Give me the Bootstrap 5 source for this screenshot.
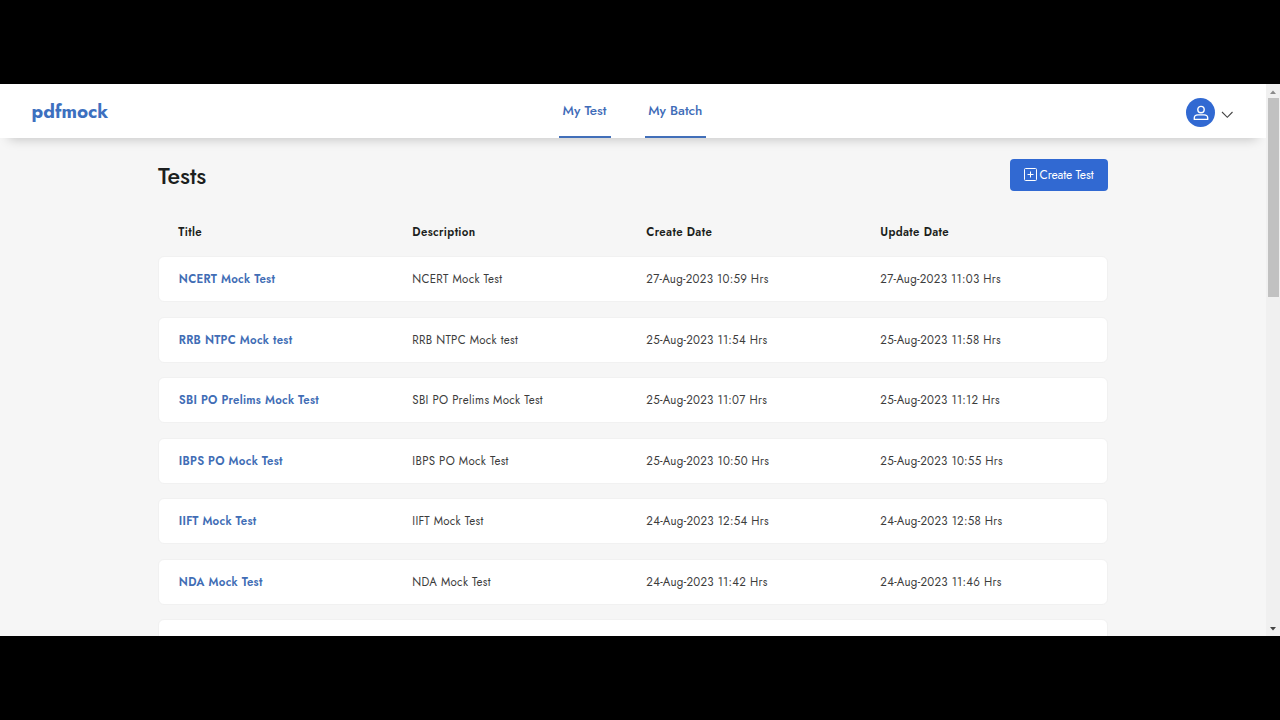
<!DOCTYPE html>
<html lang="en">
<head>
<meta charset="utf-8">
<meta name="viewport" content="width=device-width, initial-scale=1">
<title>pdfmock</title>
<link href="https://cdn.jsdelivr.net/npm/bootstrap@5.3.0/dist/css/bootstrap.min.css" rel="stylesheet">
<style>
  body { font-family: Jost, Lato, "Liberation Sans", sans-serif; height: 720px; padding: 84px 0; }
  .screen { height: 552px; background: #f6f6f6; }
  .topbar { height: 54px; padding: 0 33px 0 31px; box-shadow: 0 10px 12px -9px rgba(0,0,0,.22); z-index: 2; }
  .topbar > * { flex: 1 0 0; }
  .logo { color: #3d70bf; font-size: 18.9px; font-weight: 700; line-height: 55px; padding-left: .6px; }
  .tabs { flex: none; gap: 34px; }
  .tab-link { color: #3f6cb8; font-size: 13.500px; font-weight: 500; text-decoration: none; height: 54px; line-height: 54px; border-bottom: 2px solid #426fb9; text-align: center; white-space: nowrap; }
  .tab-test { width: 52px; }
  .tab-batch { width: 61.5px; }
  .avatar { width: 29px; height: 29px; background: #3169d2; }
  .profile { padding-top: 3px; }
  .page-body { width: 950px; margin-left: 158px; padding-top: 21px; }
  .heading { font-size: 23.400px; line-height: 35px; font-weight: 500; color: #1c1f20; }
  .create-btn, .create-btn:hover { width: 98px; height: 32px; background: #3169d2; color: #fff; font-size: 12px; border-radius: 4px; letter-spacing: -.1px; padding-right: 1px !important; }
  .create-btn svg { margin-right: 3px; margin-bottom: 1px; }
  .test-row { display: grid; grid-template-columns: 234px 234px 234px 1fr; align-items: center; padding-left: 20.300px; white-space: nowrap; font-size: 11.5px; letter-spacing: .3px; color: #3c3c3c; }
  .head-row { height: 20px; margin-top: 29px; margin-bottom: 13px; font-weight: 600; color: #1c1f20; letter-spacing: .36px; }
  .item { height: 46px; margin-bottom: 14.5px; background: #fff; border: 1px solid #f1f1f1; border-radius: 6px; padding-left: 19.300px; padding-top: 2px; }
  .item a { color: #416db5; font-weight: 600; text-decoration: none; padding-left: .5px; letter-spacing: .28px; }
  .scroll-col { width: 14px; background: #f0f0f0; }
  .scroll-thumb { width: 11px; height: 199px; background: #c1c1c1; }
</style>
</head>
<body class="bg-black m-0 overflow-hidden">
<div class="screen d-flex overflow-hidden">
  <div class="flex-grow-1 overflow-hidden">
    <nav class="topbar d-flex bg-white position-relative">
      <div class="logo">pdfmock</div>
      <div class="tabs d-flex">
        <a class="tab-link tab-test" href="#">My Test</a>
        <a class="tab-link tab-batch" href="#">My Batch</a>
      </div>
      <div class="profile d-flex align-items-center justify-content-end">
        <span class="avatar rounded-circle d-flex align-items-center justify-content-center">
          <svg width="16" height="16" viewBox="0 0 16 16" fill="none" stroke="#fff" stroke-width="1.4"><circle cx="8" cy="4.600" r="3.200"/><path d="M1.300 14.400V13c0-2 1.600-3.100 3.700-3.100h6c2.100 0 3.700 1.100 3.700 3.100v1.400z" stroke-linejoin="round"/></svg>
        </span>
        <svg class="ms-1 mt-1" width="14" height="12" viewBox="0 0 14 12" fill="none" stroke="#444" stroke-width="1.1"><path d="M3 3l5.300 5.300L13.500 3"/></svg>
      </div>
    </nav>
    <main class="page-body">
      <div class="d-flex justify-content-between">
        <h1 class="heading m-0">Tests</h1>
        <button class="create-btn btn border-0 p-0 d-flex align-items-center justify-content-center">
          <svg width="13" height="13" viewBox="0 0 13 13" fill="none" stroke="#fff"><rect x=".5" y=".5" width="12" height="12" rx="1"/><path d="M6.500 3.500v6M3.500 6.500h6"/></svg>
          <span>Create Test</span>
        </button>
      </div>
      <div class="test-row head-row"><span>Title</span><span>Description</span><span>Create Date</span><span>Update Date</span></div>
      <div class="test-row item"><a href="#">NCERT Mock Test</a><span>NCERT Mock Test</span><span>27-Aug-2023 10:59 Hrs</span><span>27-Aug-2023 11:03 Hrs</span></div>
      <div class="test-row item"><a href="#">RRB NTPC Mock test</a><span>RRB NTPC Mock test</span><span>25-Aug-2023 11:54 Hrs</span><span>25-Aug-2023 11:58 Hrs</span></div>
      <div class="test-row item"><a href="#">SBI PO Prelims Mock Test</a><span>SBI PO Prelims Mock Test</span><span>25-Aug-2023 11:07 Hrs</span><span>25-Aug-2023 11:12 Hrs</span></div>
      <div class="test-row item"><a href="#">IBPS PO Mock Test</a><span>IBPS PO Mock Test</span><span>25-Aug-2023 10:50 Hrs</span><span>25-Aug-2023 10:55 Hrs</span></div>
      <div class="test-row item"><a href="#">IIFT Mock Test</a><span>IIFT Mock Test</span><span>24-Aug-2023 12:54 Hrs</span><span>24-Aug-2023 12:58 Hrs</span></div>
      <div class="test-row item"><a href="#">NDA Mock Test</a><span>NDA Mock Test</span><span>24-Aug-2023 11:42 Hrs</span><span>24-Aug-2023 11:46 Hrs</span></div>
      <div class="test-row item"></div>
    </main>
  </div>
  <div class="scroll-col d-flex flex-column align-items-center flex-shrink-0">
    <svg width="14" height="14" viewBox="0 0 14 14"><path d="M4 10l3-3.500L10 10z" fill="#8a8a8a"/></svg>
    <div class="scroll-thumb"></div>
    <svg class="mt-auto" width="14" height="14" viewBox="0 0 14 14"><path d="M4 5h6L7 8.500z" fill="#444"/></svg>
  </div>
</div>
<script src="https://cdn.jsdelivr.net/npm/bootstrap@5.3.0/dist/js/bootstrap.bundle.min.js"></script>
</body>
</html>
